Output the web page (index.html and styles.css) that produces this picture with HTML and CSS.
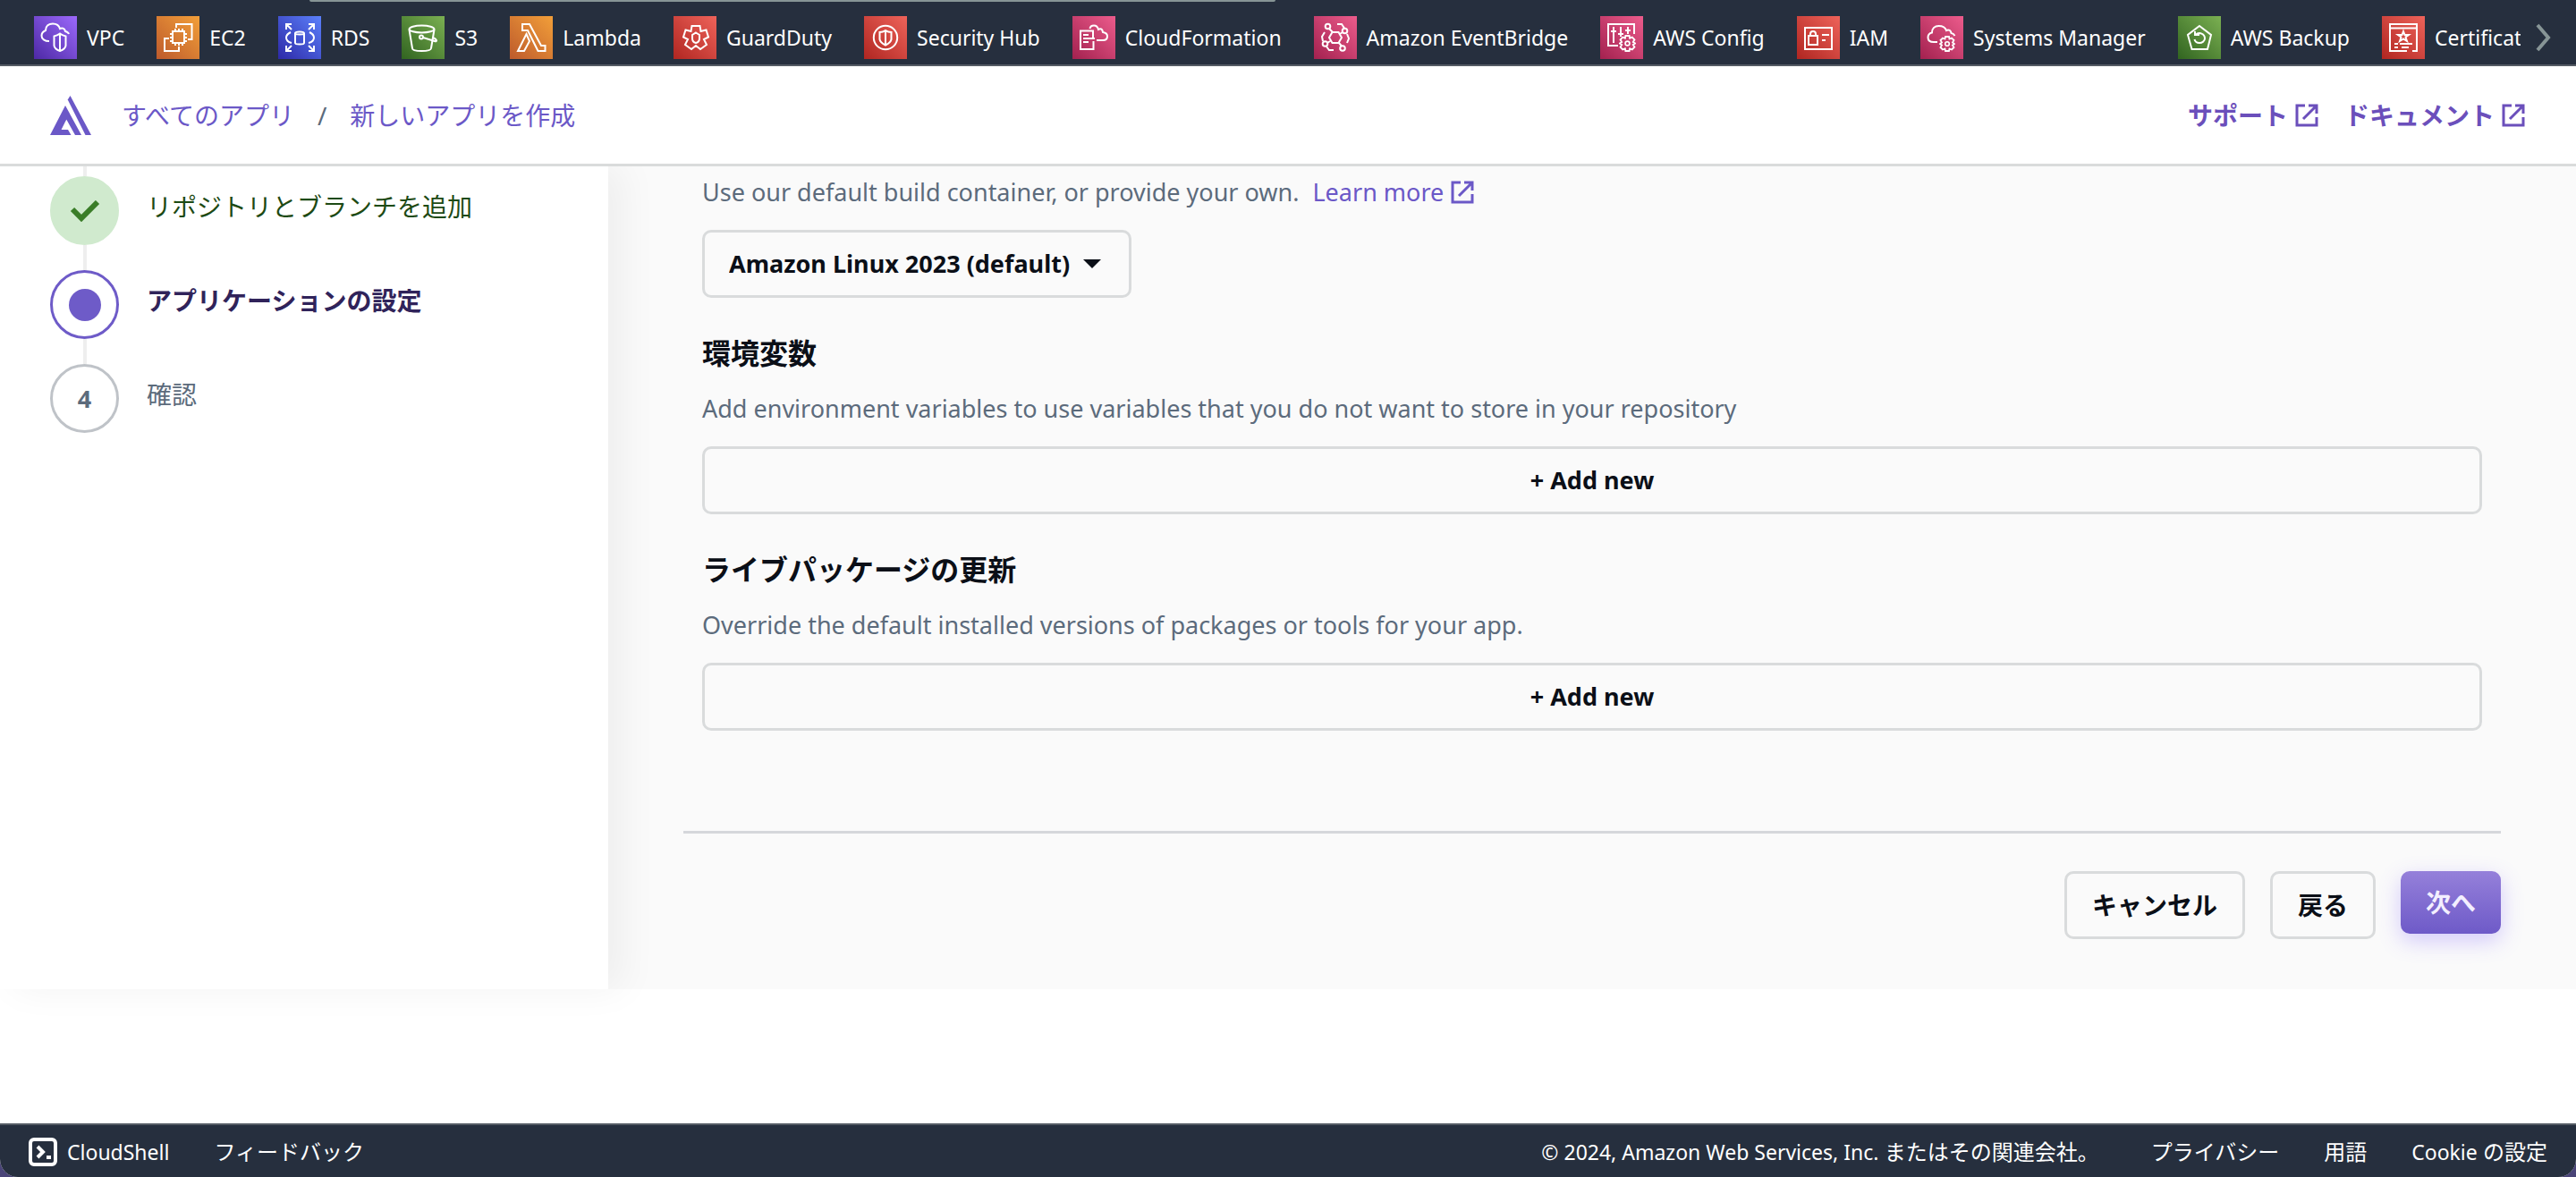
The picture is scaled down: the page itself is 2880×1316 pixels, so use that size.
FILE: index.html
```html
<!DOCTYPE html>
<html lang="ja">
<head>
<meta charset="utf-8">
<meta name="viewport" content="width=device-width, initial-scale=1">
<title>新しいアプリを作成</title>
<link rel="stylesheet" href="styles.css">
</head>
<body>
<svg class="sprite" aria-hidden="true">
  <symbol id="external" viewBox="0 0 26 26"><path d="M11 2H2V24H24V15M15 2H24V11M24 2L9 17" fill="none" stroke="currentColor" stroke-width="3"/></symbol>
  <symbol id="cog" viewBox="0 0 18 18"><path d="M7 1H11L11.500 3.500L14 2.500L16.500 5L15 7.500L17 9L15 10.500L16.500 13L14 15.500L11.500 14.500L11 17H7L6.500 14.500L4 15.500L1.500 13L3 10.500L1 9L3 7.500L1.500 5L4 2.500L6.500 3.500Z" fill="none" stroke="#fff" stroke-width="1.800"/><circle cx="9" cy="9" r="2.300" fill="none" stroke="#fff" stroke-width="1.600"/></symbol>
</svg>

<nav class="favorites" aria-label="お気に入り">
  <span class="scroll-thumb"></span>
  <ul class="services">
    <li><a href="#"><svg class="service-icon purple" viewBox="0 0 48 48"><path d="M17 28C12 28 8.500 25.500 8.500 22C8.500 19 10.500 17 13 16C13 11 16.500 8.500 21 8.500C25 8.500 28 10.500 29 14C32 12.500 34.500 14 35 17C37 17.500 38.500 18.500 39 20M29 19.500C27 21 25 22 22.500 22.500V33C23 36 26 38 29 39C32 38 35 36 35.500 33V22.500C33 22 31 21 29 19.500ZM29 20V39"/></svg>VPC</a></li>
    <li><a href="#"><svg class="service-icon orange" viewBox="0 0 48 48"><path d="M22 13V9H39.500V26H35M18 17H31V30H18ZM21 17V14M25 17V14M29 17V14M21 33V30M25 33V30M29 33V30M15 20H18M15 24H18M15 28H18M31 20H34M31 24H34M31 28H34M14 25H9V39H25V34"/></svg>EC2</a></li>
    <li><a href="#"><svg class="service-icon blue" viewBox="0 0 48 48"><path d="M9 15V9H15M9 9L15 15M34 9H40V15M40 9L34 15M9 33V39H15M9 39L15 33M40 33V39H34M40 39L34 33M19 19C19 17 29 17 29 19V30C29 32 19 32 19 30ZM19 19C19 21 29 21 29 19M14 18C10 20 9 22 9 24C9 27 11 29 15 30M35 18C39 20 40 22 40 24C40 27 38 29 34 30"/></svg>RDS</a></li>
    <li><a href="#"><svg class="service-icon green" viewBox="0 0 48 48"><ellipse cx="22.500" cy="14.500" rx="14" ry="4"/><path d="M8.500 15L12 36C12 40 32.500 40 33 36L36.500 15M24 24L37 28C40 29 40 26 35 24"/><circle cx="22" cy="23.500" r="2"/></svg>S3</a></li>
    <li><a href="#"><svg class="service-icon orange" viewBox="0 0 48 48"><path d="M14 9H22L35 33H39.500V39H31.500L20 16H14ZM18.500 20L22 28L16 39H9Z"/></svg>Lambda</a></li>
    <li><a href="#"><svg class="service-icon red" viewBox="0 0 48 48"><path d="M20.500 11H29.500L30.500 17L36.500 15.500L39 23.500L34 26L37 32L30 37L25 33L20 37L13 32L16 26L11 23.500L13.500 15.500L19.500 17ZM25 18.500L29 21V25C29 28 27 29.500 25 30C23 29.500 21 28 21 25V21Z"/></svg>GuardDuty</a></li>
    <li><a href="#"><svg class="service-icon red" viewBox="0 0 48 48"><circle cx="24" cy="24" r="13.200"/><path d="M24 16C22 17.500 20 18 17.500 18V26C18 29 21 31 24 32.500C27 31 30 29 30.500 26V18C28 18 26 17.500 24 16ZM24 16V32"/></svg>Security Hub</a></li>
    <li><a href="#"><svg class="service-icon pink" viewBox="0 0 48 48"><path d="M23 24V16.500H9V37H23.500V28M12 21H18M12 25H25M12 29H18M19.500 14C20 11 22 10.500 24 10.500C27 10.500 28.500 13 29 15C32 13 33.500 15 34 18C37 18.500 39 20 39 22.500C39 25.500 37 27 34 27H27"/></svg>CloudFormation</a></li>
    <li><a href="#"><svg class="service-icon pink" viewBox="0 0 48 48"><path d="M20.500 18H27.500L31 24L27.500 30H20.500L17 24ZM17 14L21 18M32 18L29 20M15 30L18 28M28 30L31 33.500M26 9H31L34 13.500M37 20L39 25L37 30M12 18L9 23L10 28M14 34L17 38H22"/><circle cx="15.500" cy="11.500" r="2.800"/><circle cx="34.500" cy="16.500" r="2.800"/><circle cx="12.500" cy="31" r="2.800"/><circle cx="32" cy="36" r="2.800"/></svg>Amazon EventBridge</a></li>
    <li><a href="#"><svg class="service-icon pink" viewBox="0 0 48 48"><path d="M20 33H9V9H38V20M15 12V30M12 17H18M23 12V23M20 20H26M31 12V20M28 16H34"/><use href="#cog" x="21" y="21" width="19" height="19"/></svg>AWS Config</a></li>
    <li><a href="#"><svg class="service-icon red" viewBox="0 0 48 48"><path d="M9 13H39V37H9ZM13 22H23V32H13ZM15 22V20C15 16 21 16 21 20V22M28 21H36M28 27H32"/></svg>IAM</a></li>
    <li><a href="#"><svg class="service-icon pink" viewBox="0 0 48 48"><path d="M19 29H15C11 29 8.500 27 8.500 24C8.500 21 10.500 19 13 18.500C13 14 16 11 20.500 11C25 11 28 13 29 16C32 14.500 34 16 34.500 19C37 19.500 38 21 38.500 22"/><use href="#cog" x="21" y="22" width="18" height="18"/></svg>Systems Manager</a></li>
    <li><a href="#"><svg class="service-icon green" viewBox="0 0 48 48"><path d="M24 11L37 21L33 37H15.500L11 21ZM19 17V21H24M19.500 21C24 17 30 20 30 25C30 28 27 30 24 30C21 30 19 28 18.500 26"/></svg>AWS Backup</a></li>
    <li><a href="#"><svg class="service-icon red" viewBox="0 0 48 48"><path d="M28 39H9V9H39V39H34M9 13.500H39M24 17L25.500 21H30L26.500 23.500L28 28L24 25.500L20 28L21.500 23.500L18 21H22.500ZM14 31H18M20 31H34M14 35H18M22 35H30"/></svg>Certificate Manager</a></li>
  </ul>
  <button class="scroll-next" type="button" aria-label="次へスクロール"><svg viewBox="0 0 20 32"><path d="M3 2L15 16L3 30"/></svg></button>
</nav>

<header class="app-header">
  <a class="logo" href="#" aria-label="Amplify"><svg viewBox="0 0 46 44"><path d="M17 11L22 20L17 29L12.500 38H20L23.500 44H0ZM17 11L35 44H28L13.500 18ZM20 4L22.500 0L46 44H39.500L19.500 4Z"/></svg></a>
  <nav class="breadcrumbs" aria-label="パンくずリスト">
    <a href="#">すべてのアプリ</a><span>/</span><a href="#">新しいアプリを作成</a>
  </nav>
  <div class="header-links">
    <a href="#">サポート<svg class="external"><use href="#external"/></svg></a>
    <a href="#">ドキュメント<svg class="external"><use href="#external"/></svg></a>
  </div>
</header>

<div class="layout">
  <aside class="sidebar">
    <ol class="steps">
      <li class="done"><span class="marker"><svg viewBox="0 0 34 24"><path d="M3 10L13 20L31 2"/></svg></span><span class="label">リポジトリとブランチを追加</span></li>
      <li class="current"><span class="marker"></span><span class="label">アプリケーションの設定</span></li>
      <li><span class="marker">4</span><span class="label">確認</span></li>
    </ol>
  </aside>

  <main class="content">
    <form class="settings">
      <section>
        <p class="hint"><label for="build-image">Use our default build container, or provide your own.</label> <a href="#">Learn more<svg class="external"><use href="#external"/></svg></a></p>
        <div class="select-wrap">
          <select id="build-image"><option>Amazon Linux 2023 (default)</option></select>
          <svg class="caret" viewBox="0 0 20 10"><path d="M0 0H20L10 10Z"/></svg>
        </div>
      </section>
      <section>
        <h2>環境変数</h2>
        <p class="hint">Add environment variables to use variables that you do not want to store in your repository</p>
        <button class="btn wide" type="button">+ Add new</button>
      </section>
      <section>
        <h2>ライブパッケージの更新</h2>
        <p class="hint">Override the default installed versions of packages or tools for your app.</p>
        <button class="btn wide" type="button">+ Add new</button>
      </section>
    </form>
    <div class="actions">
      <button class="btn" type="button">キャンセル</button>
      <button class="btn" type="button">戻る</button>
      <button class="btn primary" type="button">次へ</button>
    </div>
  </main>
</div>

<footer class="footer">
  <a class="cloudshell" href="#" lang="en"><svg viewBox="0 0 32 32"><rect x="2" y="2" width="28" height="28" rx="4"/><path d="M10 10L16 16L10 22M20 22H25"/></svg>CloudShell</a>
  <a href="#">フィードバック</a>
  <span class="copyright"><span lang="en">© 2024, Amazon Web Services, Inc.</span> またはその関連会社。</span>
  <a class="privacy" href="#">プライバシー</a>
  <a href="#">用語</a>
  <a href="#"><span lang="en">Cookie</span> の設定</a>
</footer>
</body>
</html>
```
FILE: styles.css
```css
*, *::before, *::after { box-sizing: border-box; }

html { background: #4a4478; }

body {
  display: flex;
  flex-direction: column;
  min-height: 100vh;
  margin: 0;
  background: #fff;
  border-radius: 0 0 20px 20px;
  overflow: hidden;
  font: 28px/40px "Noto Sans", "Noto Sans CJK JP", sans-serif;
  color: #0b0f17;
}

a { color: inherit; text-decoration: none; }
ul, ol { margin: 0; padding: 0; list-style: none; }
.sprite { display: none; }

/* Service shortcuts */
.favorites {
  position: relative;
  display: flex;
  align-items: center;
  height: 74px;
  padding: 12px 26px 0 38px;
  border-bottom: 2px solid #545b64;
  background: #262f3e;
  color: #fff;
  font-size: 23px;
}
.scroll-thumb {
  position: absolute;
  top: 0;
  left: 12%;
  width: 37.5%;
  height: 2px;
  border-radius: 0 0 2px 2px;
  background: #879596;
}
.services {
  display: flex;
  flex: 1;
  gap: 36px;
  min-width: 0;
  overflow: hidden;
  white-space: nowrap;
}
.services a { display: flex; align-items: center; gap: 11px; }
.service-icon {
  flex: none;
  width: 48px;
  height: 48px;
  fill: none;
  stroke: #fff;
  stroke-width: 2;
}
.purple { background: linear-gradient(45deg, #4d29a5, #9c69fb); }
.orange { background: linear-gradient(45deg, #bd5a2c, #f29f39); }
.blue { background: linear-gradient(45deg, #2d29a8, #5b80fa); }
.green { background: linear-gradient(45deg, #316420, #7bb052); }
.red { background: linear-gradient(45deg, #b02621, #ee635a); }
.pink { background: linear-gradient(45deg, #a3214f, #ec5c8c); }
.scroll-next {
  flex: none;
  width: 20px;
  height: 32px;
  margin-left: 16px;
  padding: 0;
  border: 0;
  background: none;
}
.scroll-next svg { display: block; fill: none; stroke: #879596; stroke-width: 4; }

/* App header */
.app-header {
  position: relative;
  z-index: 1;
  display: flex;
  align-items: center;
  height: 112px;
  padding: 0 57px 0 56px;
  border-bottom: 3px solid #d9dbdb;
  background: #fff;
}
.logo { width: 46px; height: 44px; margin-right: 34px; }
.logo svg { display: block; fill: #6b58c7; }
.breadcrumbs { display: flex; gap: 26px; color: #6b58c7; }
.breadcrumbs span { color: #5c6b7c; }
.header-links {
  display: flex;
  gap: 29px;
  margin-left: auto;
  color: #6b4fbb;
  font-weight: 600;
}
.header-links a { display: flex; align-items: center; gap: 8px; }
.external { width: 26px; height: 26px; }

/* Page body */
.layout { display: flex; }
.sidebar {
  position: relative;
  flex: none;
  width: 680px;
  padding: 11px 0 0 56px;
  background: #fff;
  box-shadow: 16px 0 40px rgba(0, 0, 0, 0.05);
}
.steps { display: flex; flex-direction: column; gap: 28px; }
.steps li { position: relative; display: flex; gap: 31px; color: #5c6b7c; }
.steps li::before {
  content: "";
  position: absolute;
  bottom: 100%;
  left: 37px;
  width: 4px;
  height: 28px;
  background: #eee;
}
.steps li:first-child::before { height: 11px; }
.marker {
  display: flex;
  align-items: center;
  justify-content: center;
  width: 77px;
  height: 77px;
  border: 3px solid #bfc3c8;
  border-radius: 50%;
  font-size: 27px;
  font-weight: 700;
}
.label { line-height: 68px; }
.steps .done { color: #1d4a14; }
.done .marker { border-color: #d0eace; background: #d0eace; }
.done svg { width: 34px; height: 24px; fill: none; stroke: #3a7d28; stroke-width: 6; }
.steps .current { color: #30235a; font-weight: 700; }
.current .marker { border-color: #6e5bc8; }
.current .marker::before {
  content: "";
  width: 36px;
  height: 36px;
  border-radius: 50%;
  background: #6e5bc8;
}

.content {
  flex: 1;
  min-width: 0;
  padding: 9px 84px 56px;
  background: #fafafa;
}
.settings {
  display: flex;
  flex-direction: column;
  gap: 38px;
  padding: 0 21px 112px;
  border-bottom: 3px solid #d5d7db;
}
h2 { margin: 0 0 18px; font-size: 32px; line-height: 48px; }
.hint { display: flex; margin: 0 0 22px; color: #5c6b7c; font-size: 27px; gap: 15px; }
.hint a { display: flex; align-items: center; gap: 8px; color: #6b58c7; }

.select-wrap { position: relative; width: 480px; }
select, .btn {
  height: 76px;
  border: 3px solid #d9dbdc;
  border-radius: 10px;
  background: #fafafa;
  color: #0b0f17;
  font: 700 27px/40px "Noto Sans", "Noto Sans CJK JP", sans-serif;
}
select { display: block; width: 100%; padding: 0 27px; appearance: none; }
.caret {
  position: absolute;
  top: 33px;
  right: 34px;
  width: 20px;
  height: 10px;
  fill: #0b0f17;
  pointer-events: none;
}
.btn { padding: 0 28px; }
.wide { display: block; width: 100%; }
.actions {
  display: flex;
  justify-content: flex-end;
  gap: 28px;
  padding-top: 42px;
}
.actions .btn { font-size: 28px; }
.actions .primary {
  height: 70px;
  border: 0;
  background: linear-gradient(#9580da, #6e5ac8);
  box-shadow: 0 8px 24px rgba(110, 80, 255, 0.28);
  color: #f3efff;
}

/* Console footer */
.footer {
  display: flex;
  align-items: center;
  gap: 50px;
  height: 60px;
  margin-top: auto;
  padding: 2px 32px 0;
  border-top: 2px solid #545b64;
  background: #262f3e;
  color: #fff;
  font-size: 24px;
}
.footer [lang="en"] { font-size: 23px; }
.cloudshell { display: flex; align-items: center; gap: 11px; }
.cloudshell svg { width: 32px; height: 32px; fill: none; stroke: #fff; stroke-width: 4; }
.copyright { margin-left: auto; }
.privacy { margin-left: 8px; }
```
